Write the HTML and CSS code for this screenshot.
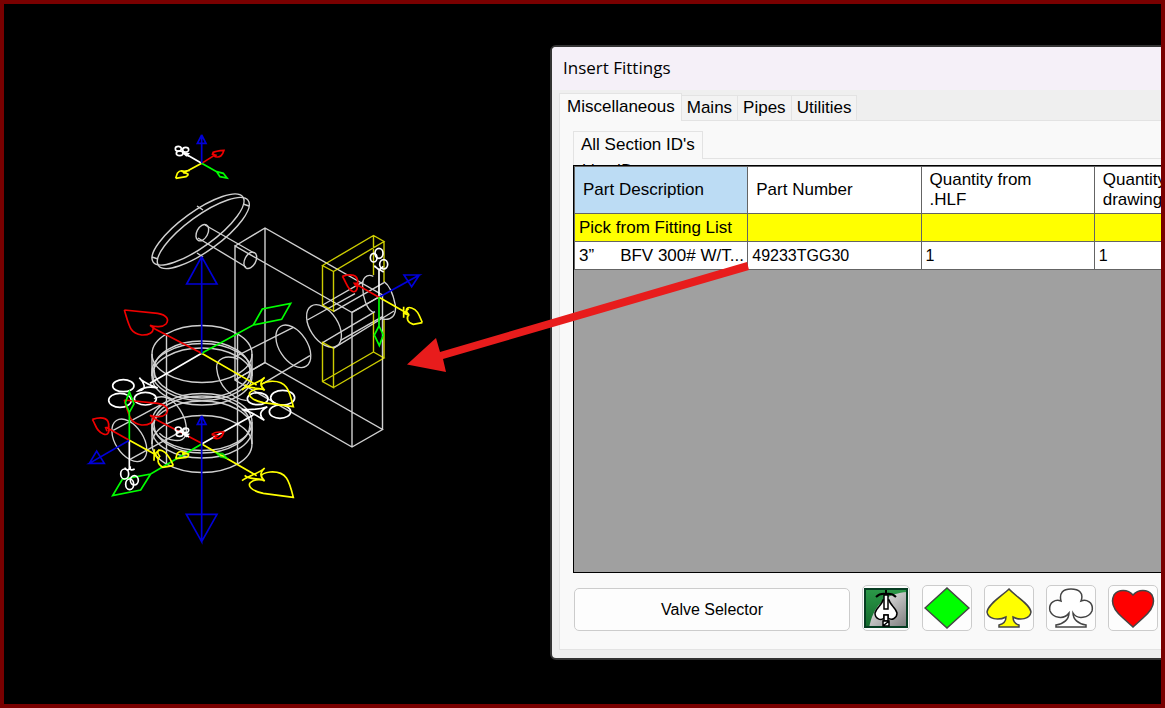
FILE: index.html
```html
<!DOCTYPE html>
<html lang="en">
<head>
<meta charset="utf-8">
<title>Insert Fittings</title>
<link rel="stylesheet" href="styles.css">
</head>
<body>
<main class="desktop">
  <svg class="drawing" width="550" height="600" viewBox="0 0 550 600" role="img" aria-label="Valve wireframe">
    <defs>
      <path id="heart" d="M365 160L225 87M133 30L233 40C262 45 268 60 258 72C248 82 226 82 210 76L225 87M219 82C222 98 206 106 185 105C150 100 148 80 133 30"/>
      <path id="spade" d="M365 160L530 255M486 270C505 255 540 247 554 232C540 246 538 256 554 271C540 260 510 270 494 254M640 320L550 308C510 300 502 282 512 275C525 265 545 265 554 271C545 260 532 250 570 244C620 240 628 270 640 320Z"/>
      <g id="ring"><ellipse rx="71" ry="42" transform="rotate(57)"/></g>
      <g id="smallclub"><ellipse cx="-12" cy="-9" rx="9" ry="7"/><ellipse cx="10" cy="-6" rx="9" ry="7"/><ellipse cx="-8" cy="5" rx="10" ry="7"/><path d="M2 3L18 6L12 12L2 3L20 14"/></g>
    </defs>
    <g class="wire gray fine">
      <path d="M235 246L265 228L382.500 295L352 312.500L235 246V380L352 447L382.500 429.500L265 362.500V228M352 312.500V447M382.500 295V429.500M235 380L265 362.500"/>
      <ellipse cx="198" cy="229.500" rx="55.400" ry="17.500" transform="rotate(-36 198 229.500)"/>
      <ellipse cx="203.300" cy="233" rx="55.400" ry="17.500" transform="rotate(-36 203.300 233)"/>
      <ellipse cx="202.300" cy="232.700" rx="8.800" ry="5.500" transform="rotate(-62 202.300 232.700)"/>
      <ellipse cx="250.300" cy="260.300" rx="8.800" ry="5.500" transform="rotate(-62 250.300 260.300)"/>
      <path d="M205 225L254 253M198 238L246 267M197 206L203 210M197 253L203 257M243 204L249 206M152 257L158 259"/>
      <ellipse cx="202" cy="354" rx="50" ry="28.500"/>
      <ellipse cx="202" cy="369.500" rx="48" ry="28.500"/>
      <ellipse cx="202" cy="372" rx="50" ry="28.500"/>
      <ellipse cx="202" cy="376.500" rx="50" ry="28.500"/>
      <ellipse cx="202" cy="422" rx="50" ry="28.500"/>
      <ellipse cx="202" cy="424.500" rx="48" ry="28.500"/>
      <ellipse cx="202" cy="429.500" rx="50" ry="28.500"/>
      <ellipse cx="202" cy="444" rx="50" ry="28.500"/>
      <path d="M152 354V376M252 354V376M152 422V444M252 422V444M166.500 333V464M237.500 333V464M154 370V378M250 370V378"/>
    </g>
    <g class="wire gray" transform="translate(220 215) scale(.33333)">
      <use href="#ring" x="312" y="333"/>
      <use href="#ring" x="220" y="394"/>
      <path d="M308 270L430 200M262 315L405 236M340 290L492 203M308 383L465 290M340 400L522 288M362 376L487 305M40 428L220 337M130 505L270 422M395 292L487 240"/>
      <path d="M460 184C440 175 425 190 428 215C428 245 440 285 462 293M492 200C510 212 520 240 526 270C530 300 515 318 487 312"/>
    </g>
    <g class="wire gray" transform="translate(80 300) scale(.33333)">
      <path d="M475 178C440 162 408 175 410 205C415 255 450 295 500 302M465 240L556 187"/>
      <use href="#ring" x="148" y="421"/>
      <path d="M222 296C262 275 298 315 315 360C325 400 318 425 285 421C265 420 250 412 238 400M98 392L260 305M150 478L320 385"/>
    </g>
    <g class="wire yellow dim fine"><path d="M322.500 265.500L373.500 235.500L384 241.500L333.500 271.500ZM322.500 265.500V305L333.500 311V271.500M373.500 235.500V275M384 241.500V282M322.500 342.500V381.500L333.500 387.500V348.500ZM333.500 387.500L384 358L373.500 352L322.500 381.500M373.500 313V352M384 320V358"/></g>
    <g class="wire axis" transform="translate(80 120) scale(.33333)">
      <path class="white" d="M365 130L318 103"/><use class="white" href="#smallclub" x="307" y="95"/>
      <path class="red" d="M365 130L403 106M395 102L408 106L404 112M397 98C405 94 418 92 432 91C428 105 420 114 408 110C400 106 404 102 397 98"/>
      <path class="yellow" d="M365 130L315 157M329 151L308 155L323 162M287 175L292 160C300 149 312 151 312 159C328 159 327 165 318 170L287 175"/>
      <path class="green" d="M365 130L410 155L430 160L441 174L420 170L410 155"/>
      <path class="blue" d="M365 130V45L352 70H378L365 45"/>
    </g>
    <g class="wire axis" transform="translate(80 300) scale(.33333)">
      <path class="white" d="M365 160L210 250M178 233C190 250 215 255 233 264C205 258 185 265 175 273C205 270 190 245 178 233"/>
      <g class="white"><ellipse cx="130" cy="257" rx="32" ry="18"/><ellipse cx="120" cy="301" rx="34" ry="21"/><ellipse cx="196" cy="296" rx="33" ry="19"/></g>
      <path class="white" d="M365 432L520 345M485 328C510 332 535 350 553 361C535 345 540 332 562 320C535 329 510 330 485 328"/>
      <g class="white"><ellipse cx="533" cy="296" rx="31" ry="18"/><ellipse cx="608" cy="293" rx="36" ry="22"/><ellipse cx="600" cy="335" rx="32" ry="20"/></g>
      <use class="red" href="#heart"/><use class="red" href="#heart" y="270"/>
      <use class="yellow" href="#spade"/><use class="yellow" href="#spade" y="272"/>
      <path class="green" d="M365 160L520 75L547 27L632 10L605 58L520 75M365 432L212 522L127 538L98 587L182 570L212 522"/>
      <path class="blue" d="M365 160V-130L320 -48H411L365 -130M365 432V725L319 643H411L365 725M365 432V348L352 373H378L365 348"/>
      <use class="white" href="#smallclub" x="307" y="397"/>
      <path class="red" d="M395 404C405 393 420 397 431 396C427 415 412 419 402 414L412 407L395 404"/>
      <path class="yellow" d="M287 476L292 460C302 449 315 458 307 463C328 458 330 467 319 472L287 476M308 456L328 463"/>
      <path class="green dim" d="M410 460L428 461L440 474L422 471Z"/>
    </g>
    <g class="wire axis" transform="translate(80 400) scale(.33333)">
      <path class="white" d="M148 121V210M134 203Q145 220 151 199Q148 215 164 207"/>
      <g class="white"><ellipse cx="134" cy="222" rx="12" ry="15"/><ellipse cx="163" cy="241" rx="12" ry="14"/><ellipse cx="149" cy="253" rx="12" ry="16"/></g>
      <path class="green" d="M148 121V37L136 8L148 -25L162 12L148 37"/>
      <path class="red" d="M148 121L82 84M89 81L77 83L81 94M37 58C70 48 88 55 86 80C90 98 82 107 70 102C48 94 48 75 37 58"/>
      <path class="blue" d="M148 121L28 190H73L50 153L28 190"/>
      <path class="yellow" d="M148 121L230 166M223 148L222 182M238 149L224 163L235 178M280 197L248 202C230 191 232 175 239 169C228 154 235 147 247 152C267 161 272 181 280 197"/>
    </g>
    <g class="wire axis" transform="translate(220 215) scale(.33333)">
      <path class="white" d="M477 247V162M463 152L477 165L490 154M463 154Q478 164 491 171"/>
      <g class="white"><ellipse cx="477" cy="115" rx="12" ry="15"/><ellipse cx="461" cy="128" rx="10" ry="13"/><ellipse cx="491" cy="148" rx="12" ry="14"/></g>
      <path class="blue" d="M477 247L598 180H552L575 215L598 180"/>
      <path class="red" d="M477 247L403 205M416 205L403 205L410 215M367 184C395 175 413 180 413 200C414 220 410 232 400 230C382 225 380 203 367 184"/>
      <path class="yellow" d="M477 247L560 294M551 275V308M566 281L552 294L568 302M607 323L580 328C562 323 558 310 566 298C553 284 560 274 575 279C594 284 599 305 607 323"/>
      <path class="green" d="M477 247V333L463 360L478 392L490 360L477 333"/>
    </g>
  </svg>

  <section class="window" aria-labelledby="window-title">
    <header class="titlebar"><h1 id="window-title">Insert Fittings</h1></header>
    <div class="content">
      <nav class="tabs" aria-label="Categories">
        <button class="tab active" type="button">Miscellaneous</button>
        <button class="tab" type="button">Mains</button>
        <button class="tab" type="button">Pipes</button>
        <button class="tab" type="button">Utilities</button>
      </nav>
      <div class="panel">
        <nav class="subtabs" aria-label="Sections"><button class="subtab" type="button">All Section ID's</button></nav>
        <div class="subpanel">
          <div class="line-label">Line ID</div>
          <div class="grid">
            <table class="parts">
              <colgroup><col><col><col><col></colgroup>
              <thead><tr><th class="selected">Part Description</th><th>Part Number</th><th>Quantity from<br>.HLF</th><th>Quantity in<br>drawing</th></tr></thead>
              <tbody>
                <tr class="pick"><td class="description">Pick from Fitting List</td><td></td><td></td><td></td></tr>
                <tr><td class="description"><span class="part"><span>3”</span><span>BFV 300# W/T...</span></span></td><td>49233TGG30</td><td>1</td><td>1</td></tr>
              </tbody>
            </table>
          </div>
        </div>
        <footer class="actions">
          <button class="btn selector" type="button">Valve Selector</button>
          <button class="btn icon valve" type="button" aria-label="Valve">
            <svg width="44" height="40" viewBox="0 0 44 40">
              <defs>
                <linearGradient id="silver" x1="0" y1="0" x2="1" y2="1"><stop offset="0" stop-color="#fff"/><stop offset="1" stop-color="#777"/></linearGradient>
                <linearGradient id="leaf" x1="0" y1="0" x2="0" y2="1"><stop offset="0" stop-color="#2c9a49"/><stop offset="1" stop-color="#12682b"/></linearGradient>
              </defs>
              <path d="M0 0H44V40H0Z" fill="url(#leaf)"/><path d="M5 40C9 19 20 5 44 4V40Z" fill="url(#silver)"/><path d="M1 1H43V39H1Z" fill="none" stroke="#063d22" stroke-width="2"/>
              <g fill="#fff" stroke="#000" stroke-width="1.500"><path d="M19 12C18 17 12 20 11 25C11 31 17 33 20 30V27H24V30C28 33 33 30 33 25C32 20 26 17 25 12Z"/><path d="M20 7H24V21H20ZM20 27H24V33H20Z"/><path d="M19 33H25V38H19ZM19 38L25 33"/><path d="M12 9Q16 5 22 6Q28 5 32 9M22 2V7" fill="none" stroke-width="2"/></g>
            </svg>
          </button>
          <button class="btn icon" type="button" aria-label="Diamond"><svg width="46" height="42" viewBox="0 0 46 42"><path class="suit lime" d="M23 1L45 21L23 41L1 21Z"/></svg></button>
          <button class="btn icon" type="button" aria-label="Spade"><svg width="46" height="42" viewBox="0 0 46 42"><path class="suit gold" d="M23 2C29 9 44 17 45 25C44 32 34 34 27 30C27 35 29 37 33 38V40H13V38C17 37 20 35 20 30C12 34 2 32 1 25C2 17 16 9 23 2Z"/></svg></button>
          <button class="btn icon" type="button" aria-label="Club"><svg width="46" height="42" viewBox="0 0 46 42"><path class="suit blank" d="M25 26C29 33 41 31 44 24C46 15 38 12 33 14C36 6 31 2 23 2C15 2 11 6 13 14C8 12 0 15 2 24C5 31 16 33 21 26C21 32 16 37 8 38V40H38V38C30 37 25 32 25 26Z"/></svg></button>
          <button class="btn icon" type="button" aria-label="Heart"><svg width="46" height="42" viewBox="0 0 46 42"><path class="suit scarlet" d="M23 8C28 2 38 2 42 8C47 18 39 26 33 31L23 40L13 31C7 26-1 18 4 8C8 2 18 2 23 8Z"/></svg></button>
        </footer>
      </div>
    </div>
  </section>

  <svg class="pointer" width="760" height="400" viewBox="0 0 760 400" aria-hidden="true"><path d="M747 262L749 270L443 359L446 372L407 364.500L436 338L440 352Z"/></svg>
</main>
</body>
</html>
```
FILE: styles.css
```css
* { box-sizing: border-box; }
body { margin: 0; background: #000; color: #000; font: 16px/20px "Liberation Sans", Arial, sans-serif; }
button { font: inherit; color: inherit; margin: 0; }
.desktop { position: relative; height: 100vh; overflow: hidden; background: #000; }
.desktop::after { content: ""; position: absolute; inset: 0; border: 4px solid #790000; pointer-events: none; }
.drawing, .pointer { position: absolute; left: 0; top: 0; pointer-events: none; }
.pointer { fill: #e81c1c; }
.wire { fill: none; stroke-width: 4; }
.axis { stroke-width: 5; }
.fine { stroke-width: 1.4; }
.gray { stroke: #d0d0d0; }
.white { stroke: #fff; }
.red { stroke: #f00000; }
.yellow { stroke: #ff0; }
.green { stroke: #0f0; }
.blue { stroke: #0000d8; }
.dim { opacity: .8; }

.window { position: absolute; left: 550px; right: -12px; top: 45px; overflow: hidden; border: 2px solid #333; border-radius: 6px; background: #efefef; }
.titlebar { height: 43px; padding: 9px 11px; background: #f5f0f8; }
h1 { margin: 0; font: 17px/24px "Open Sans", "Noto Sans", sans-serif; }
.content { padding: 3px 0 8px 7px; }
.tabs { display: flex; align-items: flex-end; height: 28px; }
.tab { height: 26px; padding: 0 5px; border: 1px solid #e3e3e3; border-left: 0; background: #f3f3f3; font-size: 17px; white-space: nowrap; }
.tab.active { position: relative; z-index: 1; height: 28px; padding: 0 6px 2px 7px; border-left: 1px solid #e3e3e3; border-bottom: 0; background: #f9f9f9; }
.panel { margin-top: -1px; padding: 10px 0 18px 13px; border: 1px solid #e3e3e3; background: #f9f9f9; }
.subtabs { display: flex; height: 28px; }
.subtab { position: relative; z-index: 1; padding: 0 7px 2px; border: 1px solid #e3e3e3; border-bottom: 0; background: #f9f9f9; font-size: 17px; }
.subpanel { margin-top: -1px; border-top: 1px solid #e3e3e3; }
.line-label { height: 6px; padding: 2px 8px 0; overflow: hidden; border-left: 1px solid #e3e3e3; }
.grid { height: 408px; overflow: hidden; border: 1px solid #000; background: #a0a0a0; }
.parts { width: 694px; table-layout: fixed; border-collapse: collapse; background: #fff; }
.parts th, .parts td { border: 1px solid #646464; font-weight: 400; text-align: left; white-space: nowrap; }
.parts th { height: 47px; padding: 0 8px; font-size: 17px; }
.parts td { height: 28px; padding: 0 4px; }
.parts .description { font-size: 17px; }
.parts .selected { background: #bcdcf4; }
.pick { background: #ff0; }
.part { display: flex; gap: 26px; }
.actions { display: flex; align-items: flex-end; gap: 12px; padding: 12px 0 0 1px; }
.btn { flex: none; padding: 0; border: 1px solid #ccc; border-radius: 5px; background: #fdfdfd; }
.selector { width: 276px; height: 43px; }
.icon { display: grid; place-items: center; width: 50px; height: 46px; }
.valve { width: 48px; }
.suit { stroke: #444; stroke-width: 1.5; }
.lime { fill: #0f0; }
.gold { fill: #ff0; }
.blank { fill: #fff; }
.scarlet { fill: #f00; }
```
